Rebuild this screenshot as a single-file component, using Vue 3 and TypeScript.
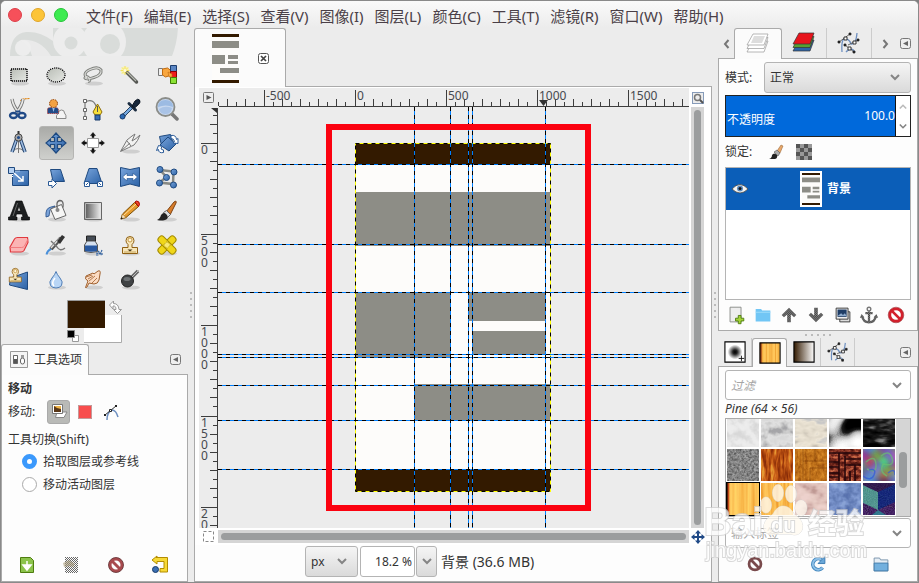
<script setup lang="ts">
import { ref } from 'vue'

interface Tool { name: string; art: string }
interface Swatch { name: string; freq: string; seed: number; r: string; g: string; b: string; octaves?: number; over?: string; split?: boolean }

const menus = ['文件(F)', '编辑(E)', '选择(S)', '查看(V)', '图像(I)', '图层(L)', '颜色(C)', '工具(T)', '滤镜(R)', '窗口(W)', '帮助(H)']

const blue = 'fill="url(#g-blue)" stroke="#1f4a80"'
const shadow = '<ellipse cx="13" cy="20.5" rx="9" ry="2" fill="#000" opacity=".12"/>'
const stamp = '<path d="M3.500 14.500h5.500v-3q-2-1.500-2-4a4 4 0 0 1 8 0q0 2.500-2 4v3h5.500v6h-15z" fill="#f7e6b9" stroke="#8f6014"/><circle cx="11" cy="7" r="2" fill="#fff6dc" stroke="#b98528" stroke-width=".8"/><path d="M5 19h12" stroke="#c8a75d"/><path d="M8.500 16.500h5l-2.500 2z" fill="#403010"/>'
const pathArt = '<path d="M5 21Q4 6 9 8q4 1 5 5 5 1 6-11M9 21q5-6 9 0" fill="none" stroke="#6d8fc0" stroke-width="1.300"/><path d="M2 11 13 3M11 14l10-5M8 14l9 7" stroke="#555" stroke-width=".9"/><path d="M1 10h2v2H1zM12 2h2v2h-2zM20 8h2v2h-2zM7 13h2v2H7zM16 20h2v2h-2z" fill="#222" stroke="#222" stroke-width=".7"/><path d="M7 6h3v3H7zM16 10h3v3h-3zM11 16h3v3h-3z" fill="#fff" stroke="#222" stroke-width=".9"/>'

const tools: Tool[] = [
  { name: '矩形选择', art: shadow + '<path d="M4 6h16v12H4z" fill="url(#g-gray)" stroke="#fff"/><path d="M4 6h16v12H4z" fill="none" stroke="#000" stroke-width="1.400" stroke-dasharray="1.300 .7"/>' },
  { name: '椭圆选择', art: shadow + '<ellipse cx="12" cy="12" rx="9" ry="7" fill="url(#g-gray)" stroke="#fff"/><ellipse cx="12" cy="12" rx="9" ry="7" fill="none" stroke="#000" stroke-width="1.300" stroke-dasharray="1.200 .9"/>' },
  { name: '自由选择', art: shadow + '<path d="M6 15Q1 10 9 6.500T20 7q1 5-7 7.500t-9 .5q1-3 4 0 2 3-1 3.500" fill="none" stroke="#7d7f7b" stroke-width="3"/><path d="M6 15Q1 10 9 6.500T20 7q1 5-7 7.500t-9 .5q1-3 4 0 2 3-1 3.500" fill="none" stroke="#d9dad7" stroke-width="1.100"/>' },
  { name: '模糊选择', art: '<circle cx="7" cy="7.500" r="4" fill="#fdf6a4" opacity=".8"/><path d="m9 9.500 9.500 9.500" stroke="#555753" stroke-width="3.500" stroke-linecap="round"/><path d="m9 9 9 9" stroke="#b5b8b0" stroke-width="1.200"/><path d="M7 3v9M2.500 7.500h9M4 4.500l6 6M10 4.500l-6 6" stroke="#f1dc47" stroke-width=".8"/><circle cx="7" cy="7.500" r="1.500" fill="#fffbe0"/>' },
  { name: '按颜色选择', art: '<path d="M3.500 5.500h4v7h-4z" fill="#eee" stroke="#777"/><path d="m7.500 6 5-1 4 3 2 4-3 2-2-1-3 1-3-2z" fill="#f8a63e" stroke="#c06a10"/><path d="M15.500 2.500h6v6h-6z" fill="#5b86c4" stroke="#1c3d6e"/><path d="M15.500 8.500h6v6h-6z" fill="#ee1c1c" stroke="#8d0000"/><path d="M15.500 14.500h6v6h-6z" fill="#8ae234" stroke="#3f7d05"/><path d="m13 9 4 2v3h-3z" fill="#f8a63e" stroke="#c06a10" stroke-width=".6"/>' },
  { name: '剪刀选择', art: '<path d="M13.500 4q1-2.500 9-2.500" fill="none" stroke="#e28a1c" stroke-width="1.200" stroke-dasharray="2 .600"/><path d="M5 2q1 7 7 14M16 2q-1 7-7 14" fill="none" stroke="#777" stroke-width="3.400"/><path d="M5 2q1 7 7 14M16 2q-1 7-7 14" fill="none" stroke="#e8e8e6" stroke-width="1.700"/><ellipse cx="6.500" cy="18.500" rx="3.500" ry="2.500" fill="none" stroke="#204a87" stroke-width="2.300"/><ellipse cx="15" cy="18.500" rx="3.500" ry="2.500" fill="none" stroke="#204a87" stroke-width="2.300"/><path d="M8.500 14.500h5" stroke="#204a87" stroke-width="2"/>' },
  { name: '前景选择', art: '<path d="M12.500 21.500q-1-3 2-5.500 0-3 3-3t3 3q2 2 1.500 5.500z" fill="#f4f4f4" stroke="#888"/><path d="M3.500 16.500v-4q0-2 3-2h5q3 0 3 3v3z" fill="#204a87" stroke="#a33" stroke-dasharray="1 1"/><path d="M8 10l1.500 5 1.500-5z" fill="#9fc0ec"/><circle cx="9.500" cy="6.500" r="4" fill="#f4a243" stroke="#8b3d08" stroke-dasharray="1.500 1"/>' },
  { name: '路径', art: '<path d="M4 4v16M4 5q9-5 12 7" fill="none" stroke="#777" stroke-width="1.200"/><path d="M2.500 2.500h3v3h-3zM2.500 11.500h3v3h-3zM2.500 19.500h3v3h-3z" fill="#fff" stroke="#666"/><path d="m16.500 7 4.500 8-2 3h-5l-2-3z" fill="#f8e03b" stroke="#8d6d0b"/><path d="M16.500 9v6" stroke="#555"/><path d="M14 18h5v5h-5z" fill="#3a6db3" stroke="#173a6a"/>' },
  { name: '颜色选取', art: '<path d="m14 8-8 8q-3 1-2.500 4 3 1.500 4.500-2l8-8z" fill="#77a9df" stroke="#27425f"/><path d="m11 6.500 6.500 6.500" stroke="#1b2c40" stroke-width="3" stroke-linecap="round"/><path d="m14 9 3-5q3-3 4.500-1t-1 4.500l-4 3.500z" fill="#16273b" stroke="#0b1521"/><circle cx="4.500" cy="19.500" r="2.500" fill="#2d6bb4" stroke="#173a6a"/>' },
  { name: '缩放', art: '<path d="m17 17 5 5" stroke="#777" stroke-width="3.500" stroke-linecap="round"/><circle cx="10.500" cy="10" r="9" fill="#c8d8ef" stroke="#8b8d89" stroke-width="1.800"/><path d="M3 10q0-7 7.500-7t7.500 7q-7-3-15 0z" fill="#9cbbe3"/><path d="M4 12q6-4 13-1-1 6-6.500 6T4 12z" fill="#a9c3e6"/>' },
  { name: '测量', art: '<path d="M11.500 5v17M6 20q5-5 11 0" stroke="#777" fill="none"/><path d="m10 7-5 14M13 7l5 14" stroke="#27466f" stroke-width="3.600"/><path d="m10 7-5 14M13 7l5 14" stroke="#9dbbe0" stroke-width="1.600"/><circle cx="11.500" cy="6.500" r="3.600" fill="#aaa" stroke="#444"/><circle cx="11.500" cy="6.500" r="1.500" fill="#204a87"/><path d="M11.500 0v3" stroke="#333" stroke-width="2"/>' },
  { name: '移动', art: `<path d="m12 2 4 4.500h-2.500v4h4V8L22 12l-4.500 4v-2.500h-4v4H16L12 22l-4-4.500h2.500v-4h-4V16L2 12l4.500-4v2.500h4v-4H8z" ${blue} stroke-width="1.200"/>` },
  { name: '对齐', art: '<path d="M6.500 7.500h11v9h-11z" fill="#fff" stroke="#999"/><path d="M12 1.500 9.500 4.500H11v2h2v-2h1.500zM12 22.500l-2.500-3H11v-2h2v2h1.500zM.500 12l3-2.500V11h2v2h-2v1.500zM23.500 12l-3-2.500V11h-2v2h2v1.500z" fill="#111" stroke="#111" stroke-width=".5"/>' },
  { name: '裁剪', art: shadow + '<path d="M2.500 20.500 9 9q6-5 8-6l-3 7q4-2 8-6-2 6-6 10-4 2-13.500 6.500z" fill="#f2f2f1" stroke="#777"/><path d="m3 20 9-8M13 15 9 10" stroke="#777" fill="none"/>' },
  { name: '旋转', art: `<path d="m4.500 5.500 11-2 2 7-11 4z" ${blue}/><path d="m5 14 8-8 8 7-7 7z" ${blue}/><path d="M16 4.500q5-1 5.500 4l1.500-1v5l-5-.5 1.500-1.500q-.5-3-3.500-3zM8.500 21.500q-5 1-5-3l-2 1 2-5 4 1-1.500 1.500q0 2 2.500 2z" fill="#fff" stroke="#2a5a97"/>` },
  { name: '缩放图层', art: `<path d="M5.500 5.500h16v15h-16z" ${blue}/><path d="M5.500 12V6h7" fill="none" stroke="#fff" stroke-dasharray="1 1"/><path d="M1.500 2.500h6v6h-6z" fill="#b6d1f2" stroke="#1f4a80"/><path d="m7 8 9 8m0-5v5h-5" stroke="#fff" stroke-width="1.500" fill="none"/>` },
  { name: '切变', art: `<path d="M6.500 4.500h10l4 12H9z" ${blue}/><path d="M4.500 16.500H8v-2.500l4.500 4.500L8 23v-2.500H4.500z" fill="#fff" stroke="#2a5a97"/>` },
  { name: '透视', art: `<path d="M8 3.500h8l5 15H3z" ${blue}/><path d="M3.500 16.500h5v5h-5zM16.500 16.500h5v5h-5z" fill="#fff" stroke="#2a5a97"/><path d="m5 20 2.500-2.500M20 20l-2.500-2.500" stroke="#2a5a97"/>` },
  { name: '翻转', art: `<path d="M2.500 2.500 12 4.500l9.500-2v19L12 19l-9.500 2.500z" ${blue}/><path d="M4.500 12 9 8v2.500h6V8l4.500 4L15 16v-2.500H9V16z" fill="#fff" stroke="#2a5a97" stroke-width=".7"/>` },
  { name: '笼变换', art: `<path d="M5 5 18.500 6.500 18 19 4.500 17.500 11.500 12z" fill="none" stroke="#888a85" stroke-width="2.500"/><g ${blue}><circle cx="5" cy="4.500" r="3"/><circle cx="19" cy="7" r="3"/><circle cx="18.500" cy="20" r="3"/><circle cx="4.500" cy="18" r="3"/><circle cx="11.500" cy="12.500" r="3"/></g>` },
  { name: '文字', art: shadow + '<path d="M9 2h6l6 16h1.500v3h-8v-3h1.500l-.8-3H9.500l-.8 3H10v3H1.500v-3H3zM12 7l-1.500 5h3z" fill="#1d1f20" fill-rule="evenodd" stroke="#000" stroke-width=".6"/><path d="M10.500 4 6 17" stroke="#666"/>' },
  { name: '油漆桶', art: shadow + '<path d="M2 18q-1-9 5-10l4-1-5 4-1 6z" fill="#7ba3d8" stroke="#204a87" stroke-width=".8"/><path d="m6.500 10 11-4.500 4.500 11-11 4z" fill="#f6f6f5" stroke="#666"/><path d="M14 12q-3-10 2-10.500 4 0 3 7" fill="none" stroke="#666" stroke-width="1.300"/><circle cx="13.500" cy="11" r="2" fill="#888"/>' },
  { name: '渐变', art: shadow + '<path d="M3.500 3.500h17v17h-17z" fill="url(#g-fade)" stroke="#666"/><path d="M4.500 4.500h15v15h-15z" fill="none" stroke="#ddd" stroke-width=".7"/>' },
  { name: '铅笔', art: shadow + '<path d="m3 20 1.500-5L16.500 3.500 20.500 7.500 8 18.500z" fill="#e59b2f" stroke="#7a4d02"/><path d="m6 16 12-11" stroke="#ffe09a"/><path d="m17 3 1.500-1q3 0 3 3.500l-1 2z" fill="#ef4929" stroke="#a00"/><path d="m3 20 1.500-5 3.500 3.500z" fill="#f6e3c0" stroke="#8f5902" stroke-width=".5"/><path d="m2.500 20.500 1-2.500 1.500 1.500z" fill="#222"/>' },
  { name: '画笔', art: shadow + '<path d="m11 13 8-10q3-2 2 1l-6 12z" fill="#d87d2b" stroke="#7d4110"/><path d="m8.500 13.500 3-2 4 4-3 3z" fill="#ddd" stroke="#666"/><path d="M2 21q3-1 4-5 3-4 6 0 2 4-2 5-4 1-8 0z" fill="#222"/>' },
  { name: '橡皮擦', art: shadow + '<path d="m3 14 4.500-8q1-1.500 3-1.500h10l.5 5-4 8q-1 1.500-3 1.500H3.500z" fill="#fbb4b4" stroke="#e0393e" stroke-width="1.200"/><path d="M3.500 14.500h11q2 0 3-1.500L21 6" fill="none" stroke="#f17c7f"/>' },
  { name: '喷枪', art: shadow + '<path d="M2.500 21.500q1-4 5-6" stroke="#4a90d9" stroke-width="2" fill="none"/><path d="m7 16 10-11" stroke="#555" stroke-width="4"/><path d="m7 15 9-10" stroke="#ddd" stroke-width="1.500"/><path d="m13 8 5-6 3 2-5 7z" fill="#333"/><path d="m7 8 6 6q3 5 8 1" fill="none" stroke="#777" stroke-width="1.400"/>' },
  { name: '墨水', art: shadow + '<path d="M5.500 3h9v5h-9z" fill="#454c55" stroke="#222"/><path d="M6 8h8l2.500 4v6.500q-6.500 2-13 0V12z" fill="#d5e0ee" stroke="#555"/><path d="M4 12.500h12v5.500q-6 1.500-12 0z" fill="#2858a0"/><path d="M15 20l7 1M17 18l4 4M21 17l-2 5M15 22h3" stroke="#3465a4" stroke-width="1.200" stroke-dasharray="2 .6"/>' },
  { name: '克隆', art: shadow + `<g transform="translate(1)">${stamp}</g>` },
  { name: '修复', art: shadow + '<g fill="#f0d619" stroke="#a38b03"><rect x="8.500" y="1" width="7" height="22" rx="3" transform="rotate(45 12 12)"/><rect x="8.500" y="1" width="7" height="22" rx="3" transform="rotate(-45 12 12)"/></g><path d="m8.500 12 3.500-3.500 3.500 3.500-3.500 3.500z" fill="#f7e873" stroke="#a38b03" stroke-dasharray="1 1"/>' },
  { name: '透视克隆', art: `<path d="m3.500 11 17-6v17.500L2.500 18z" ${blue}/><g transform="translate(-.5 -1.500) scale(.8)">${stamp}</g>` },
  { name: '模糊', art: shadow + '<path d="M12 4.500q1 3 4 6.500 3.500 4 1.500 7.500-2 2.500-5.500 2.500t-5.500-2.500q-2-3.500 1.500-7.500 3-3.500 4-6.500z" fill="#b8d5f5" stroke="#4f7db5"/><path d="M11 11q-4 5-1 8" stroke="#fff" stroke-width="1.500" fill="none"/>' },
  { name: '涂抹', art: shadow + '<path d="M4.500 20.500 7 14q-4-2-2-5l7-3 1 1 4-3q3-1 2 3l-1 6q-1 4-5 4l-5-1-2 4q-1 1-1.500.5z" fill="#fbdcc3" stroke="#a0602d"/><path d="M7 12l5-3M8 14l6-5M11 16l5-5M5 10l6-2" stroke="#a0602d" stroke-width=".8"/>' },
  { name: '减淡', art: shadow + '<path d="m12 12 8-8" stroke="#666" stroke-width="3.500"/><path d="m12 12 9-9" stroke="#bbb"/><circle cx="9.500" cy="14" r="6" fill="#3f4244" stroke="#222"/><ellipse cx="9" cy="12" rx="3.500" ry="2" fill="#6f7375"/>' },
]
const activeTool = ref('移动')

const footLeft: Tool[] = [
  { name: '保存选项', art: '<path d="M5.500 4.500h10l3 3v12h-13z" fill="#8bc34a" stroke="#4e7d0f"/><path d="M12 8v5m-4-1 4 5 4-5z" fill="#fff" stroke="#fff" stroke-width="1.500"/>' },
  { name: '恢复选项', art: '<path d="M6 4h13v16H6z" fill="url(#p-dots)"/><path d="m4 10 6-3 6 4-2 3-4-1-5 1z" fill="#a99b7a" opacity=".6"/>' },
  { name: '删除选项', art: '<circle cx="12" cy="12" r="6" fill="none" stroke="#a84a4e" stroke-width="3"/><path d="m8 8 8 8" stroke="#a84a4e" stroke-width="3"/><circle cx="12" cy="12" r="7.500" fill="none" stroke="#5d2d30" stroke-width=".8"/>' },
  { name: '重置选项', art: '<path d="M8 4.500h11.500V19H12v-3.500h4v-7H9V11L4 7l5-4v2" fill="#f7d936" stroke="#b38c00"/><circle cx="7.500" cy="16.500" r="3" fill="#3c6fb3" stroke="#173a6a"/>' },
]
const noEntry = '<circle cx="12" cy="12" r="6.800" fill="#fff" stroke="#d3202c" stroke-width="3"/><path d="m7.500 7.500 9 9" stroke="#d3202c" stroke-width="3"/><circle cx="12" cy="12" r="8.500" fill="none" stroke="#8d1018" stroke-width=".6"/>'
const layerActions: Tool[] = [
  { name: '新建图层', art: '<path d="M5.500 3.500h12v16h-12z" fill="#eee" stroke="#888a85"/><path d="M13 12.500h3v3h3v3h-3v3h-3v-3h-3v-3h3z" fill="#a4d338" stroke="#4e7d0f" transform="translate(1.500)"/>' },
  { name: '新建图层组', art: '<path d="M4 5.500h6l1 1.500h9v12H4z" fill="#71c6f5"/><path d="M4 9h16" stroke="#a4def9"/>' },
  { name: '提升', art: '<path d="m12 4 8 8-2.500 2.500L14 11.500V20h-4v-8.500l-3.500 3L4 12z" fill="url(#p-dark)"/>' },
  { name: '降低', art: '<path d="m12 20 8-8-2.500-2.500L14 12.500V4h-4v8.500l-3.500-3L4 12z" fill="url(#p-dark)"/>' },
  { name: '复制', art: '<path d="M8.500 8.500h11v11h-11z" fill="#ddd" stroke="#333"/><path d="M4.500 4.500h13v12h-13z" fill="#eee" stroke="#333"/><path d="M6 6h10v8H6z" fill="#1f3d66"/><path d="m6 13 4-3 2 2 2-2 2 3z" fill="#8daacc"/>' },
  { name: '锚定', art: '<path d="M12 8v12M8 10h8M4.500 13q1 7 7.500 7t7.500-7" fill="none" stroke="url(#p-dark)" stroke-width="2.500"/><path d="m2 15 2-4 3 4zM22 15l-2-4-3 4z" fill="url(#p-dark)"/><circle cx="12" cy="5.500" r="2" fill="none" stroke="#777" stroke-width="1.500"/>' },
  { name: '删除图层', art: noEntry },
]
const patternActions: Tool[] = [
  { name: '删除', art: '<circle cx="12" cy="12" r="6.500" fill="none" stroke="#794a4c" stroke-width="3"/><path d="m8 8 8 8" stroke="#794a4c" stroke-width="3"/>' },
  { name: '刷新', art: '<path d="M17 16a6 6 0 1 1-1-8.500" fill="none" stroke="#4287be" stroke-width="4"/><path d="M17 16a6 6 0 1 1-1-8.500" fill="none" stroke="#8fc1e8" stroke-width="2"/><path d="M19.500 4v7.500H12z" fill="#69a7d8" stroke="#3878b0"/>' },
  { name: '打开', art: '<path d="M4.500 5.500h6l1 2h8v12h-15z" fill="#e6eef5" stroke="#7590a8"/><path d="M4.500 11h15v8.500h-15z" fill="#72b0de" stroke="#3d79a8"/>' },
]
const layerStack = (c: string[]) => c.map((f, i) => `<path d="M7 ${2 + i * 3.500}h15l-4 11H1z" fill="${f}" stroke="${c[0] === '#fff' ? '#999' : '#333'}" stroke-width=".700"/>`).reverse().join('')
const topTabs: Tool[] = [
  { name: '图层', art: layerStack(['#fff', '#fff', '#fff']) + '<path d="M8 4h11l-3 7H5z" fill="#ddd"/>' },
  { name: '通道', art: layerStack(['#e8141c', '#58a032', '#2d64a8']) },
  { name: '路径', art: pathArt },
]
const lowTabs: Tool[] = [
  { name: '画笔', art: '<path d="M1 1h22v22H1z" fill="#fff" stroke="#000" stroke-width="1.200"/><circle cx="12" cy="12" r="8" fill="url(#g-soft)"/><path d="M19 16v6M16 19h6" stroke="#111"/>' },
  { name: '图案', art: '<path d="M1 1h22v22H1z" fill="#ffc65a"/><path d="M4 1v22M8 1v22M12 1v22M14 1v22M18 1v22M21 1v22" stroke="#eb9b2d" stroke-width=".8"/><path d="M2 1v22" stroke="#9b3e13" stroke-width="2"/><path d="M1 1h22v22H1z" fill="none" stroke="#000" stroke-width="1.200"/>' },
  { name: '渐变', art: '<path d="M1 1h22v22H1z" fill="url(#g-brown)" stroke="#000" stroke-width="1.200"/>' },
  { name: '路径', art: pathArt },
]

const swatches: Swatch[] = [
  { name: 'Marble 1', freq: '.12', seed: 2, r: '.85 .88 .92 .93', g: '.85 .88 .92 .93', b: '.85 .88 .92 .93' },
  { name: 'Marble 2', freq: '.1', seed: 5, r: '.65 .8 .88 .85', g: '.65 .8 .88 .85', b: '.66 .8 .88 .85' },
  { name: 'Marble 3', freq: '.06 .1', seed: 8, r: '.75 .87 .93 .78', g: '.72 .84 .9 .78', b: '.68 .78 .84 .78' },
  { name: 'Leopard', freq: '.05', seed: 11, octaves: 1, r: '0 0 .1 .7 .9 1', g: '0 0 .1 .7 .9 1', b: '0 0 .1 .7 .9 1' },
  { name: 'Dark', freq: '.06 .14', seed: 4, r: '0 .05 .12 .3 .5', g: '0 .05 .12 .3 .5', b: '0 .05 .12 .3 .5' },
  { name: 'Slate', freq: '.4', seed: 7, r: '.35 .45 .55 .65', g: '.35 .45 .55 .65', b: '.35 .45 .55 .65', over: '<path d="M0 8 32 2M0 20 32 9M0 30 32 20M5 32 16 0M16 32 28 0M0 14l32-6M8 32 22 4" stroke="#aaa" stroke-width=".6" opacity=".5"/>' },
  { name: 'Wood 1', freq: '.3 .06', seed: 3, r: '.5 .64 .8 .9', g: '.15 .25 .38 .6', b: '.03 .05 .1 .2' },
  { name: 'Parquet 1', freq: '.3 .2', seed: 6, r: '.64 .72 .78 .84', g: '.34 .42 .47 .54', b: '.06 .09 .12 .16', over: '<path d="M8 32V12h24M15 32V19h17M8 12V0M20 12V0" fill="none" stroke="#7a3c08" opacity=".55"/>' },
  { name: 'Parquet 2', freq: '.2 .3', seed: 9, r: '.3 .42 .6 .8', g: '.08 .14 .25 .42', b: '.06 .1 .18 .28', over: '<path d="M0 4h32M10 4v28M16 7v25M16 16h16M21 22v10M0 13h10M0 18h10M0 24h10M26 16v16M0 28h10M16 10h16" stroke="#26070b" stroke-width="1.600"/>' },
  { name: 'Swirl', freq: '.07', seed: 12, octaves: 1, r: '.3 .4 .5 .7', g: '.2 .4 .55 .8', b: '.3 .5 .7 .8', split: true, over: '<path d="M3 13q9-8 10 2t-9 5M18 7q8-7 11 2t-9 6q-4 8 4 12" fill="none" stroke="#6abf70" opacity=".7" stroke-width="1.500"/><path d="M0 27q8 6 11-1t-5-5M25 24q7-6 7 2" fill="none" stroke="#3058d8" stroke-width="1.500" opacity=".7"/>' },
  { name: 'Pine', freq: '.28 .004', seed: 2, r: '.95 .98 1 1', g: '.65 .73 .8 .85', b: '.22 .3 .38 .4', over: '<path d="M1 0v32" stroke="#c24a1a" stroke-width="2.500"/><path d="M0 0v32" stroke="#511c08" stroke-width="2"/>' },
  { name: 'Pine 2', freq: '.28 .02', seed: 9, r: '.94 .97 1 1', g: '.62 .7 .77 .82', b: '.2 .27 .35 .4' },
  { name: 'Pink Marble', freq: '.07 .1', seed: 3, r: '.75 .85 .9 .93', g: '.6 .72 .79 .82', b: '.58 .7 .76 .8' },
  { name: 'Sky', freq: '.12', seed: 8, r: '.34 .4 .48 .56', g: '.44 .5 .58 .66', b: '.68 .72 .8 .85' },
  { name: 'Cubes', freq: '.9', seed: 8, r: '.1 .2 .3 .4', g: '.05 .1 .2 .4', b: '.2 .4 .5 .5', over: '<path d="M0 2 15 9v18L0 20z" fill="#58b89a" opacity=".75"/><path d="M15 9 32 1v18L15 27z" fill="#0a2a7e" opacity=".75"/><path d="M0 2V0h32v1L15 9z" fill="#301848" opacity=".8"/><path d="M0 20 15 27v5H0zM15 27l17-8v13H15z" fill="#4a2058" opacity=".5"/><path d="m9 32 6-5 8 5z" fill="#2a9ba0" opacity=".7"/>' },
]

/* canvas coordinates are measured from the top left of the view */
const guidesX = [196, 232, 250, 254, 327]
const guidesY = [57, 137, 185, 247, 250, 278, 313, 362]
const blocks = [
  { x: 137, y: 36, w: 195, h: 21, c: '#331a00' },
  { x: 137, y: 85, w: 195, h: 54, c: '#8d8d86' },
  { x: 137, y: 185, w: 95, h: 65, c: '#8d8d86' },
  { x: 250, y: 185, w: 77, h: 29, c: '#8d8d86' },
  { x: 254, y: 224, w: 73, h: 23, c: '#8d8d86' },
  { x: 196, y: 277, w: 136, h: 36, c: '#8d8d86' },
  { x: 137, y: 362, w: 195, h: 22, c: '#331a00' },
]
const ticks = (origin: number, from: number, to: number) => {
  const out: { p: number; kind: number }[] = []
  for (let i = from; i <= to; i++) {
    const kind = i % 10 === 0 ? 0 : i % 2 === 0 ? 1 : 2
    out.push({ p: Math.floor(origin + i * 9.1) + 0.5, kind })
  }
  return out
}
const hTicks = ticks(137, -15, 120)
const vTicks = ticks(36, -3, 120)
const tickStart = [2, 11, 14]
const hLabels = [-500, 0, 500, 1000, 1500]
const vLabels = [0, 500, 1000, 1500, 2000]

const mode = ref('正常')
const unit = ref('px')
const opacity = ref('100.0')
const zoomLevel = ref('18.2 %')
const toggle = ref('pick')
const thumb = '<path d="M0 0h27v49H0z" fill="#fdfcfa"/><path d="M0 0h27v3H0zM0 46h27v3H0z" fill="#331a00"/><path d="M0 7h27v7H0zM0 21h13v9H0zM16 21h10v4H16zM16 27h10v3H16zM8 34h19v5H8z" fill="#8d8d86"/>'
</script>

<template>
  <div class="window">
    <svg class="defs" aria-hidden="true">
      <defs>
        <linearGradient id="g-blue" x2="1" y2="1"><stop stop-color="#79a5dc" /><stop offset="1" stop-color="#2c62a6" /></linearGradient>
        <linearGradient id="g-gray" x2="1" y2="1"><stop stop-color="#b9bdb6" /><stop offset="1" stop-color="#e6e8e4" /></linearGradient>
        <linearGradient id="g-fade"><stop stop-color="#555" /><stop offset="1" stop-color="#f4f4f4" /></linearGradient>
        <linearGradient id="g-brown"><stop stop-color="#331a00" /><stop offset="1" stop-color="#fff" /></linearGradient>
        <radialGradient id="g-soft"><stop stop-color="#000" /><stop offset=".3" stop-color="#222" /><stop offset="1" stop-color="#fff" /></radialGradient>
        <pattern id="p-dots" width="2" height="2" patternUnits="userSpaceOnUse"><path d="M0 0h1v1H0zM1 1h1v1H1z" fill="#666" /></pattern>
        <pattern id="p-dark" width="2" height="2" patternUnits="userSpaceOnUse"><path d="M0 0h2v2H0z" fill="#8a8a8a" /><path d="M0 0h1v1H0zM1 1h1v1H1z" fill="#3a3a3a" /></pattern>
        <filter v-for="(s, i) in swatches" :id="'tex' + i" :key="s.name" x="0" y="0" width="1" height="1" color-interpolation-filters="sRGB">
          <feTurbulence type="fractalNoise" :baseFrequency="s.freq" :numOctaves="s.octaves ?? 3" :seed="s.seed" />
          <feColorMatrix :values="s.split ? '2 0 0 0 -.5 0 2 0 0 -.5 0 0 2 0 -.5 0 0 0 0 1' : '2 0 0 0 -.5 2 0 0 0 -.5 2 0 0 0 -.5 0 0 0 0 1'" />
          <feComponentTransfer>
            <feFuncR type="table" :tableValues="s.r" /><feFuncG type="table" :tableValues="s.g" /><feFuncB type="table" :tableValues="s.b" />
          </feComponentTransfer>
        </filter>
      </defs>
    </svg>

    <header class="menubar">
      <div class="lights"><button class="light red" aria-label="关闭" /><button class="light amber" aria-label="最小化" /><button class="light green" aria-label="最大化" /></div>
      <nav class="menus"><button v-for="m in menus" :key="m">{{ m }}</button></nav>
    </header>

    <main class="workspace">
      <aside class="left">
        <svg class="banner" viewBox="0 0 187 28" aria-hidden="true">
          <path d="M9 28Q9 6 25 4q14-1 27 9V0h125q-1 16-6 28z" fill="#d9dcda" />
          <circle cx="69" cy="13" r="17" fill="#ededed" /><circle cx="103" cy="14" r="22" fill="#ededed" />
          <circle cx="22" cy="20" r="8" fill="#ededed" /><path d="M31 28q-2-10-12-16 20-2 31 16z" fill="#ededed" opacity=".8" />
          <circle cx="70" cy="15" r="6.500" fill="#d9dcda" /><circle cx="109" cy="16" r="10" fill="#d9dcda" />
        </svg>
        <div class="tools">
          <button v-for="t in tools" :key="t.name" class="tool" :class="{ on: t.name === activeTool }" :aria-label="t.name" @click="activeTool = t.name">
            <svg viewBox="0 0 24 24" class="i24" v-html="t.art" />
          </button>
        </div>
        <button class="colors" aria-label="前景色与背景色">
          <svg width="56" height="44" viewBox="0 0 56 44">
            <path d="M17 15h37v27H17z" fill="#fff" /><path d="M17 42.500h37.500V15" fill="none" stroke="#aaa" />
            <path d="M1 1h37v27H1z" fill="#331a00" /><path d="M.5 28V.5H38" fill="none" stroke="#999" />
            <path d="m42.500 5 4-4v2.500q5 0 5.500 6h2.500l-4 4-4-4H49q0-4-3-3.500V9z" fill="#fff" stroke="#999" />
            <path d="M5.500 35.500h6v6h-6z" fill="#fff" stroke="#999" /><path d="M.5 30.500h7v7h-7z" stroke="#888" />
          </svg>
        </button>
        <div class="opt-head">
          <button class="opt-tab">
            <svg width="19" height="18" viewBox="0 0 19 18"><path d="M.5.5h17v16H.5z" fill="#f4f4f4" stroke="#999" /><path d="M3.500 4.500h4v8h-4z" fill="#555" stroke="#666" /><path d="M4 5h3v3H4z" fill="#fff" /><rect x="10.500" y="7" width="4" height="6" rx="2" fill="#fff" stroke="#666" /><path d="M11 4h3v3h-3z" fill="#999" /></svg>
            工具选项
          </button>
          <button class="mini" aria-label="面板菜单"><svg width="11" height="11" viewBox="0 0 11 11"><rect x=".5" y=".5" width="10" height="10" rx="2" fill="#eee" stroke="#777" /><path d="M8 3v5L3 5.500z" fill="#666" /></svg></button>
        </div>
        <section class="options">
          <h2>移动</h2>
          <div class="target">
            <span>移动:</span>
            <button class="on" aria-label="图层"><svg width="18" height="18" viewBox="0 0 18 18"><path d="M5.500 14.500 7 9h10l-3 5.500z" fill="#fff" stroke="#888" /><path d="M2.500 1.500h10v9h-10z" fill="#fff" stroke="#777" /><path d="M4 3h7v6H4z" fill="#593717" /><path d="M4 3h7v3L7 5z" fill="#f1b548" /></svg></button>
            <button aria-label="选区"><svg width="16" height="16" viewBox="0 0 16 16"><path d="M1.500 1.500h13v13h-13z" fill="#f84d4d" stroke="#fff" /><path d="M1.500 1.500h13v13h-13z" fill="none" stroke="#833" stroke-dasharray="1 1" /></svg></button>
            <button aria-label="路径"><svg width="18" height="18" viewBox="0 0 18 18"><path d="M5 17q0-8 5-10 4 0 6 7" fill="none" stroke="#6d8fc0" stroke-width="1.500" /><path d="M3 12 14 3" stroke="#333" /><path d="M2 11h2v2H2zM13 2h2v2h-2z" fill="#222" /><path d="M7.500 6.500h2v2h-2z" fill="#fff" stroke="#222" /></svg></button>
          </div>
          <p>工具切换(Shift)</p>
          <label><input v-model="toggle" type="radio" name="toggle" value="pick">拾取图层或参考线</label>
          <label><input v-model="toggle" type="radio" name="toggle" value="active">移动活动图层</label>
          <footer><button v-for="f in footLeft" :key="f.name" :aria-label="f.name"><svg class="i24" viewBox="0 0 24 24" v-html="f.art" /></button></footer>
        </section>
      </aside>

      <div class="grip"><i v-for="n in 5" :key="n" /></div>

      <section class="center">
        <div class="doc-tab">
          <svg width="27" height="49" viewBox="0 0 27 49" v-html="thumb" />
          <button aria-label="关闭图像"><svg width="11" height="11" viewBox="0 0 11 11"><rect x=".5" y=".5" width="10" height="10" rx="2" fill="#fff" stroke="#555" /><path d="m3 3 5 5M8 3 3 8" stroke="#444" stroke-width="1.700" /></svg></button>
        </div>
        <div class="view">
          <button class="corner" aria-label="图像菜单"><svg width="11" height="11" viewBox="0 0 11 11"><rect x=".5" y=".5" width="10" height="10" rx="1" fill="#eee" stroke="#777" /><path d="M3.500 3v5l5-2.500z" fill="#555" /></svg></button>
          <svg class="hruler">
            <path v-for="t in hTicks" :key="t.p" :d="`M${t.p} ${tickStart[t.kind]}V18`" class="tick" />
            <path d="M1 18.500h2000" class="tick" />
            <text v-for="(l, i) in hLabels" :key="l" :x="48 + i * 91" y="12">{{ l }}</text>
            <path d="M321 12h9l-4.500 6z" fill="#333" />
          </svg>
          <button class="corner" aria-label="缩放窗口"><svg width="12" height="12" viewBox="0 0 12 12"><path d="M0 0h12v12H0z" fill="#ececec" /><path d="M.5.5h11v11H.5z" fill="none" stroke="#204a87" stroke-dasharray="1 1" /><circle cx="5.500" cy="5.500" r="3" fill="none" stroke="#777" stroke-width="1.500" /><path d="m8 8 3 3" stroke="#555" stroke-width="2" /></svg></button>
          <svg class="vruler">
            <path v-for="t in vTicks" :key="t.p" :d="`M${tickStart[t.kind]} ${t.p}H18`" class="tick" />
            <path d="M18.500 1v2000" class="tick" />
            <path d="M12 1h6v5z" fill="#333" />
            <template v-for="(l, i) in vLabels" :key="l">
              <text v-for="(d, j) in String(l)" :key="j" x="2" :y="47 + i * 91 + j * 11">{{ d }}</text>
            </template>
          </svg>
          <svg class="canvas">
            <path d="M137 36h195v348H137z" fill="#fdfcfa" />
            <rect v-for="(b, i) in blocks" :key="i" :x="b.x" :y="b.y" :width="b.w" :height="b.h" :fill="b.c" />
            <rect x="137.500" y="36.500" width="195" height="348" class="edge" />
            <rect x="137.500" y="36.500" width="195" height="348" class="edge dash" />
            <g class="guide">
              <path v-for="x in guidesX" :key="x" :d="`M${x + .5} 0v2000`" /><path v-for="y in guidesY" :key="y" :d="`M0 ${y + .5}h2000`" />
            </g>
            <g class="guide dash">
              <path v-for="x in guidesX" :key="x" :d="`M${x + .5} 0v2000`" /><path v-for="y in guidesY" :key="y" :d="`M0 ${y + .5}h2000`" />
            </g>
            <rect x="111" y="20" width="259" height="381" fill="none" stroke="#fb0210" stroke-width="6" />
          </svg>
          <div class="vbar"><i /></div>
          <button class="corner" aria-label="快速蒙版"><svg width="11" height="11" viewBox="0 0 11 11"><path d="M.5.5h10v10H.5z" fill="none" stroke="#888" stroke-dasharray="3 2" /></svg></button>
          <div class="hbar"><i /></div>
          <button class="corner" aria-label="导航"><svg width="14" height="14" viewBox="0 0 14 14"><path d="m7 0 3 3.500H8V6h2.500V4L14 7l-3.500 3V8H8v2.500h2L7 14l-3-3.500h2V8H3.500v2L0 7l3.500-3v2H6V3.500H4z" fill="#204a87" /></svg></button>
        </div>
        <footer class="status">
          <div class="pick unit"><select v-model="unit" aria-label="单位"><option>px</option></select><svg class="chev" viewBox="0 0 10 7"><path d="m1 1 4 4 4-4" /></svg></div>
          <input v-model="zoomLevel" class="zoom" aria-label="缩放比例">
          <button class="drop" aria-label="缩放列表"><svg class="chev" viewBox="0 0 10 7"><path d="m1 1 4 4 4-4" /></svg></button>
          <span>背景 (36.6 MB)</span>
        </footer>
      </section>

      <div class="grip"><i v-for="n in 5" :key="n" /></div>

      <aside class="right">
        <div class="tabs">
          <button class="arrow" aria-label="前一个"><svg width="7" height="10" viewBox="0 0 7 10"><path d="M5.500 1 2 5l3.500 4" /></svg></button>
          <button v-for="(t, i) in topTabs" :key="t.name" class="tab" :class="{ on: i === 0 }" :aria-label="t.name"><svg class="i24" viewBox="0 0 24 24" v-html="t.art" /></button>
          <button class="arrow next" aria-label="后一个"><svg width="7" height="10" viewBox="0 0 7 10"><path d="M1.500 1 5 5 1.500 9" /></svg></button>
          <button class="mini" aria-label="面板菜单"><svg width="11" height="11" viewBox="0 0 11 11"><rect x=".5" y=".5" width="10" height="10" rx="2" fill="#eee" stroke="#777" /><path d="M8 3v5L3 5.500z" fill="#666" /></svg></button>
        </div>
        <section class="panel layers">
          <div class="mode"><label for="mode">模式:</label><div class="pick"><select id="mode" v-model="mode"><option>正常</option></select><svg class="chev" viewBox="0 0 10 7"><path d="m1 1 4 4 4-4" /></svg></div></div>
          <div class="opacity">
            <div class="fill"><label for="opacity">不透明度</label><input id="opacity" v-model="opacity"></div>
            <div class="spin"><button aria-label="增加"><svg class="chev pale" viewBox="0 0 10 7"><path d="m1 6 4-4 4 4" /></svg></button><button aria-label="减少"><svg class="chev" viewBox="0 0 10 7"><path d="m1 1 4 4 4-4" /></svg></button></div>
          </div>
          <div class="lock"><span>锁定:</span>
            <button aria-label="锁定像素"><svg width="16" height="16" viewBox="0 0 16 16"><path d="m9 7 4-6 2 1-3 7z" fill="#e8a76a" stroke="#8a5a2b" stroke-width=".5" /><path d="m6 8 3-2 3 3-2 3z" fill="#aaa" stroke="#555" stroke-width=".6" /><path d="M1 15q3-1 3-4 2-3 5 0 1 3-2 4z" fill="#222" /></svg></button>
            <button aria-label="锁定透明"><svg width="16" height="16" viewBox="0 0 16 16"><path d="M0 0h16v16H0z" fill="#999" /><path d="M0 0h4v4H0zM8 0h4v4H8zM4 4h4v4H4zM12 4h4v4h-4zM0 8h4v4H0zM8 8h4v4H8zM4 12h4v4H4zM12 12h4v4h-4z" fill="#555" /></svg></button>
          </div>
          <div class="list">
            <button class="layer">
              <svg width="16" height="12" viewBox="0 0 16 12"><path d="M0 6q8-9 16 0-8 8-16 0z" fill="#f4f4f2" stroke="#444" stroke-width=".8" /><circle cx="8" cy="5.500" r="3" fill="#5b8bc0" /><circle cx="8" cy="5.500" r="1.500" fill="#111" /></svg>
              <svg class="thumb" width="22" height="36" viewBox="-3 -3 33 55" preserveAspectRatio="none"><path d="M-3-3h33v55H-3z" fill="#fff" /><g v-html="thumb" /></svg>
              <b>背景</b>
            </button>
          </div>
          <footer><button v-for="a in layerActions" :key="a.name" :aria-label="a.name"><svg class="i22" viewBox="0 0 24 24" v-html="a.art" /></button></footer>
        </section>
        <div class="hgrip"><i v-for="n in 5" :key="n" /></div>
        <div class="tabs low">
          <button v-for="(t, i) in lowTabs" :key="t.name" class="tab" :class="{ on: i === 1 }" :aria-label="t.name"><svg class="i24" viewBox="0 0 24 24" v-html="t.art" /></button>
          <button class="mini" aria-label="面板菜单"><svg width="11" height="11" viewBox="0 0 11 11"><rect x=".5" y=".5" width="10" height="10" rx="2" fill="#eee" stroke="#777" /><path d="M8 3v5L3 5.500z" fill="#666" /></svg></button>
        </div>
        <section class="panel patterns">
          <div class="combo"><input class="slant" placeholder="过滤" aria-label="过滤"><svg class="chev" viewBox="0 0 10 7"><path d="m1 1 4 4 4-4" /></svg></div>
          <p>Pine (64 × 56)</p>
          <div class="gallery">
            <div class="cells">
              <button v-for="(s, i) in swatches" :key="s.name" :class="{ on: i === 10 }" :aria-label="s.name">
                <svg viewBox="0 0 32 32"><rect width="32" height="32" :filter="`url(#tex${i})`" /><g v-if="s.over" v-html="s.over" /></svg>
              </button>
            </div>
            <div class="track"><i /></div>
          </div>
          <div class="combo"><input placeholder="输入标签" aria-label="输入标签"><svg class="chev" viewBox="0 0 10 7"><path d="m1 1 4 4 4-4" /></svg></div>
          <footer><button v-for="a in patternActions" :key="a.name" :aria-label="a.name"><svg class="i22" viewBox="0 0 24 24" v-html="a.art" /></button></footer>
        </section>
      </aside>
    </main>

    <svg class="mark" width="180" height="100" viewBox="0 0 180 100">
      <g class="paw"><ellipse cx="65" cy="31" rx="5.500" ry="8" /><ellipse cx="77" cy="19" rx="5.500" ry="8.500" /><ellipse cx="90" cy="20" rx="5.500" ry="8.500" /><ellipse cx="100" cy="34" rx="6" ry="8" /><path d="M82 32q7 0 11 8 11 7 8 16-3 7-12 4H76q-9 3-13-4-2-9 9-16 4-8 10-8z" /></g>
      <text x="3" y="61" class="big">Bai</text><text x="70" y="58" class="du">du</text><text x="107" y="60" class="cn">经验</text>
      <text x="5" y="83" class="url">jingyan.baidu.com</text>
    </svg>
  </div>
</template>

<style>
body { margin: 0; background: #7f8080; }
</style>

<style scoped>
* { box-sizing: border-box; }
.window { position: relative; display: grid; grid-template-rows: 27px minmax(0, 1fr); height: 100vh; min-height: 560px; overflow: hidden; background: #ececec; border: 1px solid #8a8a8a; border-radius: 6px 6px 0 0; color: #333; font: 12px/16px "Noto Sans", "Noto Sans CJK SC", sans-serif; }
button, input, select { margin: 0; padding: 0; border: 0; background: none; color: inherit; font: inherit; border-radius: 0; }
svg { display: block; flex: none; }
p, h2 { margin: 0; }
.defs { position: absolute; width: 0; height: 0; }
.i24 { width: 24px; height: 24px; }
.i22 { width: 22px; height: 22px; }

.menubar { display: flex; align-items: center; background: linear-gradient(#fafafa, #ececec); }
.lights { display: flex; gap: 9px; padding-left: 7px; width: 85px; }
.light { width: 14px; height: 14px; border-radius: 50%; }
.red { background: #f6505a; border: 1px solid #dd3f49; }
.amber { background: #fcc438; border: 1px solid #e0a52a; }
.green { background: #3deb50; border: 1px solid #27c53a; }
.menus { display: flex; gap: 11px; font-size: 15px; line-height: 24px; padding-top: 2px; color: #4a3f47; white-space: nowrap; }

.workspace { display: grid; grid-template-columns: 187px 6px minmax(0, 1fr) 6px 200px; min-height: 0; }
.grip { display: flex; flex-direction: column; justify-content: center; align-items: center; gap: 4px; }
.grip i, .hgrip i { width: 2px; height: 2px; background: #bbb; }

.left { display: flex; flex-direction: column; min-height: 0; }
.banner { width: 187px; height: 28px; }
.tools { display: grid; grid-template-columns: repeat(5, 1fr); width: 184px; padding-top: 2px; }
.tool { display: grid; place-items: center; height: 34px; }
.tool.on { background: linear-gradient(#a9aaa7, #cfd0cd); border: 1px solid #b5b5b3; border-radius: 3px; margin: 0 1px; }
.tool.on svg { margin: -1px; }
.colors { align-self: flex-start; margin: 4px 0 0 66px; }
.opt-head { display: flex; justify-content: space-between; align-items: center; height: 30px; padding-right: 7px; }
.opt-tab { position: relative; display: flex; align-items: center; gap: 5px; height: 31px; width: 88px; padding-left: 8px; background: #fcfcfc; border: 1px solid #aaa; border-bottom: 0; border-radius: 3px 3px 0 0; }
.options { flex: 1; display: flex; flex-direction: column; padding: 5px 7px 4px 6px; background: #fdfdfd; border: 1px solid #aaa; }
h2 { font-size: 12px; line-height: 18px; }
.target { display: flex; align-items: center; gap: 3px; height: 28px; }
.target span { width: 36px; }
.target button { display: grid; place-items: center; width: 23px; height: 24px; }
.target .on { background: #b9bab7; border: 1px solid #aaa; border-radius: 3px; }
.options p { margin: 6px 0 2px; line-height: 16px; }
.options label { display: flex; align-items: center; gap: 6px; height: 23px; padding-left: 14px; }
.options input { appearance: none; width: 15px; height: 15px; border: 1px solid #aaa; border-radius: 50%; background: #fff; }
.options input:checked { border: 5px solid #3b99fc; }
.options footer { display: flex; justify-content: space-between; margin: auto 8px 0 7px; }

.center { display: flex; flex-direction: column; min-width: 0; min-height: 0; }
.doc-tab { position: relative; z-index: 1; display: flex; align-items: center; gap: 19px; width: 92px; height: 59px; margin-bottom: -1px; padding-left: 17px; background: #fbfbfb; border: 1px solid #aaa; border-bottom: 0; border-radius: 3px 3px 0 0; }
.view { flex: 1; display: grid; grid-template-columns: 19px minmax(0, 1fr) 18px; grid-template-rows: 19px minmax(0, 1fr) 17px; min-height: 0; padding: 1px 4px 0; background: linear-gradient(#ececec, #ececec) 4px 1px / calc(100% - 26px) calc(100% - 18px) no-repeat #fff; border: solid #aaa; border-width: 1px 1px 0; }
.corner { display: grid; place-items: center; }
.hruler, .vruler, .canvas { width: 100%; height: 100%; overflow: hidden; font-size: 12px; }
.hruler text, .vruler text { fill: #46494f; }
.tick { stroke: #3d3d3d; fill: none; }
.guide { stroke: #0080ff; fill: none; }
.edge { stroke: #ff0; fill: none; }
.guide.dash, .edge.dash { stroke: #000; stroke-dasharray: 4 4; }
.vbar { width: 13px; margin-left: 2px; padding: 3px; background: #d5d5d5; }
.vbar i, .hbar i { display: block; width: 100%; height: 100%; background: #9b9d9e; border-radius: 4px; }
.hbar { height: 13px; margin-top: 2px; padding: 3px; background: #d5d5d5; }
.status { display: flex; align-items: center; height: 37px; padding: 0 0 3px 110px; background: #fdfdfd; border: solid #aaa; border-width: 0 1px 1px; }
.status span { font-size: 14px; margin-left: 4px; white-space: nowrap; }
.pick { display: grid; grid-template-columns: 1fr 20px; align-items: center; background: linear-gradient(#f5f5f5, #dadada); border: 1px solid #b4b4b4; border-radius: 3px; height: 31px; }
.pick select { appearance: none; grid-area: 1 / 1 / 2 / 3; height: 29px; padding-left: 5px; }
.pick .chev { grid-area: 1 / 2; pointer-events: none; }
.unit { width: 53px; }
.zoom { width: 55px; height: 31px; margin: 0 1px 0 2px; padding-right: 2px; text-align: right; background: #fff; border: 1px solid #b4b4b4; border-radius: 3px; }
.drop { display: grid; place-items: center; width: 21px; height: 31px; background: linear-gradient(#f5f5f5, #dadada); border: 1px solid #b4b4b4; border-radius: 3px; }
.chev { width: 10px; height: 7px; fill: none; stroke: #858585; stroke-width: 2; }
.pale { stroke: #bbb; }

.right { display: flex; flex-direction: column; min-width: 0; min-height: 0; }
.tabs { display: flex; height: 31px; margin-bottom: -1px; z-index: 1; }
.arrow { display: grid; place-items: center; width: 16px; }
.arrow.next { margin-left: 5px; }
.arrow svg { fill: none; stroke: #777; stroke-width: 2; }
.tab { display: grid; place-items: center; width: 45px; height: 30px; border-right: 1px solid #ccc; }
.tab.on { width: 48px; height: 31px; background: #fbfbfb; border: 1px solid #aaa; border-bottom: 0; border-radius: 3px 3px 0 0; }
.mini { margin-left: auto; padding-right: 7px; }
.opt-head .mini { padding-right: 0; }
.low { height: 29px; }
.low .tab { width: 34px; height: 28px; }
.low .tab.on { height: 29px; width: 35px; }
.low .i24 { width: 22px; height: 22px; }
.panel { display: flex; flex-direction: column; background: #fdfdfd; border: 1px solid #aaa; padding: 3px 6px 0; }
.layers { height: 273px; }
.mode { display: grid; grid-template-columns: 39px minmax(0, 1fr); align-items: center; }
.opacity { display: grid; grid-template-columns: minmax(0, 1fr) 14px; height: 42px; margin-top: 2px; border: 1px solid #222; }
.fill { display: flex; align-items: center; background: #0069db; color: #fff; border-right: 1px solid #111; padding: 0 0 0 1px; }
.fill label { flex: none; padding-top: 8px; }
.fill input { width: 100%; min-width: 0; text-align: right; color: #fff; }
.spin { display: grid; place-items: center; background: #fff; }
.spin .chev { width: 8px; }
.lock { display: flex; align-items: center; gap: 12px; height: 30px; }
.lock span { width: 31px; }
.list { flex: 1; background: #fff; border: 1px solid #b4b4b4; }
.layer { display: flex; align-items: center; width: 100%; height: 42px; padding-left: 6px; background: #0b5eb8; color: #fff; }
.thumb { margin: 0 5px 0 52px; }
.layers footer { display: flex; justify-content: space-between; height: 30px; align-items: center; padding: 0 4px 0 0; }
.hgrip { display: flex; justify-content: center; align-items: center; gap: 4px; height: 7px; }
.patterns { flex: 1; min-height: 0; }
.combo { display: grid; grid-template-columns: 1fr 18px; align-items: center; height: 30px; flex: none; background: #fff; border: 1px solid #b4b4b4; border-radius: 3px; }
.combo input { grid-area: 1 / 1 / 2 / 3; min-width: 0; height: 28px; padding-left: 5px; }
.combo .chev { grid-area: 1 / 2; }
.combo input::placeholder { color: #a5a5a5; opacity: 1; }
.slant::placeholder { font-style: italic; }
.patterns p { font-style: italic; line-height: 18px; }
.gallery { display: grid; grid-template-columns: minmax(0, 1fr) 14px; height: 99px; flex: none; overflow: hidden; border: 1px solid #aaa; background: #fff; }
.cells { display: grid; grid-template-columns: repeat(5, 32px); gap: 2px; margin-top: -4px; padding-left: 1px; align-content: start; }
.cells button, .cells svg { width: 32px; height: 32px; }
.cells .on { outline: 1px solid #000; }
.track { background: #d5d5d5; padding: 33px 3px 0; }
.track i { display: block; height: 36px; background: #9b9d9e; border-radius: 4px; }
.gallery + .combo { margin-top: 1px; }
.patterns footer { display: flex; justify-content: space-between; align-items: center; padding: 5px 19px 0; }

.mark { position: absolute; right: 37px; bottom: 8px; pointer-events: none; opacity: .78; font-family: "Liberation Sans", "Noto Sans CJK SC", sans-serif; }
.mark text, .paw { fill: #fff; stroke: #d0d0d0; stroke-width: 2; paint-order: stroke; }
.paw { fill: #fffaf0; stroke-width: 1; }
.mark .big { font-size: 38px; font-weight: bold; }
.mark .du { font-size: 20px; font-weight: bold; }
.mark .cn { font-size: 28px; font-weight: bold; }
.mark .url { font-size: 20px; }
</style>
